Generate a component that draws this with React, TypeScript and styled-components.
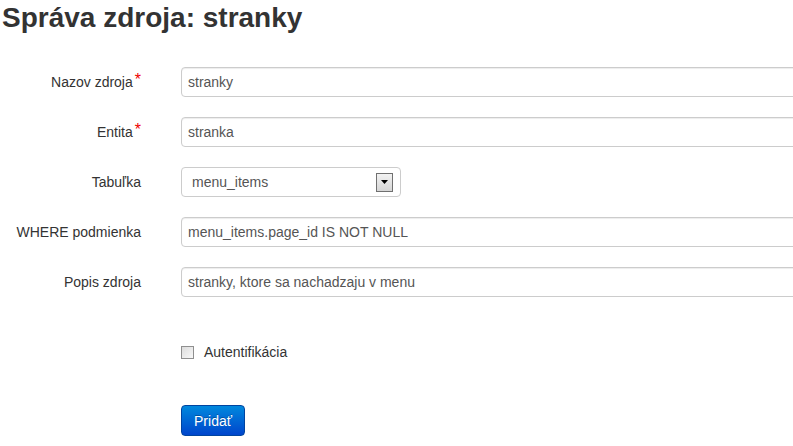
import React from "react";
import styled, { createGlobalStyle } from "styled-components";

const Global = createGlobalStyle`
  html, body { margin: 0; padding: 0; background: #fff; }
  body {
    font-family: "Liberation Sans", Arial, sans-serif;
    font-size: 14px;
    color: #333;
    overflow: hidden;
  }
`;

const Page = styled.div`
  width: 793px;
  height: 446px;
  padding: 0 0 0 2px;
  box-sizing: border-box;
`;

const Title = styled.h1`
  margin: 0;
  padding-top: 3px;
  font-size: 28px;
  line-height: 30px;
  font-weight: bold;
  color: #333;
`;

const Form = styled.form`
  display: flex;
  flex-direction: column;
  margin-top: 34px;
`;

const Row = styled.div<{ $gap?: number }>`
  display: flex;
  align-items: center;
  height: 30px;
  margin-bottom: ${(p) => p.$gap ?? 20}px;
`;

const Label = styled.label`
  width: 139px;
  margin-right: 40px;
  text-align: right;
  line-height: 20px;
  color: #333;
  flex-shrink: 0;
`;

const Req = styled.span`
  color: #e00;
  margin-left: 2px;
  font-size: 16px;
  position: relative;
  top: -2px;
`;

const TextInput = styled.input`
  width: 640px;
  height: 30px;
  box-sizing: border-box;
  padding: 4px 6px;
  border: 1px solid #ccc;
  border-radius: 4px;
  box-shadow: inset 0 1px 1px rgba(0, 0, 0, 0.075);
  font-family: inherit;
  font-size: 14px;
  color: #555;
  background: #fff;
  outline: none;
  flex-shrink: 0;
`;

const SelectBox = styled.div`
  width: 220px;
  height: 30px;
  box-sizing: border-box;
  border: 1px solid #ccc;
  border-radius: 4px;
  display: flex;
  align-items: center;
  justify-content: space-between;
  padding: 0 7px 0 10px;
  color: #555;
  background: #fff;
`;

const ArrowBtn = styled.div`
  width: 15px;
  height: 17px;
  border: 1px solid #707070;
  background: linear-gradient(#f2f2f2, #d6d6d6);
  display: flex;
  align-items: center;
  justify-content: center;
`;

const CheckRow = styled.div`
  display: flex;
  align-items: center;
  margin-left: 179px;
  margin-top: 45px;
  height: 20px;
`;

const Check = styled.span`
  width: 11px;
  height: 11px;
  border: 1px solid #8f8f8f;
  background: linear-gradient(135deg, #dcdcdc, #f8f8f8);
  margin-right: 10px;
`;

const Button = styled.button`
  margin-left: 179px;
  margin-top: 43px;
  width: 64px;
  height: 31px;
  border: 1px solid #0044a0;
  border-radius: 4px;
  background: linear-gradient(#0088dd, #0045cc);
  color: #fff;
  font-family: inherit;
  font-size: 14px;
  text-shadow: 0 -1px 0 rgba(0, 0, 0, 0.25);
  padding: 0;
  align-self: flex-start;
`;

export default function App() {
  return (
    <Page>
      <Global />
      <Title>Správa zdroja: stranky</Title>
      <Form>
        <Row>
          <Label>
            Nazov zdroja<Req>*</Req>
          </Label>
          <TextInput defaultValue="stranky" />
        </Row>
        <Row>
          <Label>
            Entita<Req>*</Req>
          </Label>
          <TextInput defaultValue="stranka" />
        </Row>
        <Row>
          <Label>Tabuľka</Label>
          <SelectBox>
            <span>menu_items</span>
            <ArrowBtn>
              <svg width="7" height="4" viewBox="0 0 7 4">
                <path d="M0 0h7L3.5 4z" fill="#000" />
              </svg>
            </ArrowBtn>
          </SelectBox>
        </Row>
        <Row>
          <Label>WHERE podmienka</Label>
          <TextInput defaultValue="menu_items.page_id IS NOT NULL" />
        </Row>
        <Row $gap={0}>
          <Label>Popis zdroja</Label>
          <TextInput defaultValue="stranky, ktore sa nachadzaju v menu" />
        </Row>
        <CheckRow>
          <Check />
          <span>Autentifikácia</span>
        </CheckRow>
        <Button type="button">Pridať</Button>
      </Form>
    </Page>
  );
}
